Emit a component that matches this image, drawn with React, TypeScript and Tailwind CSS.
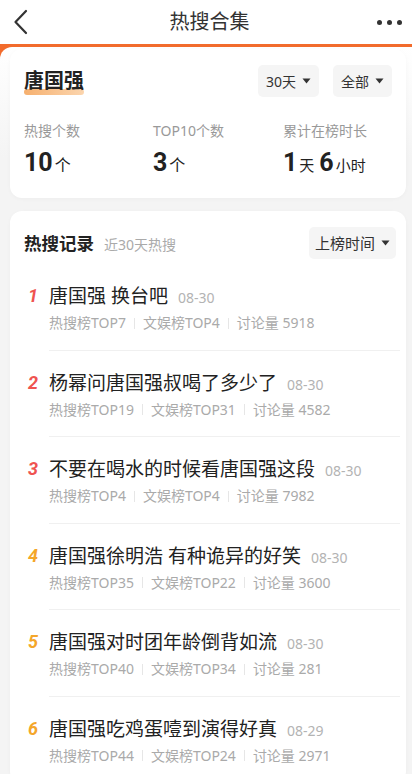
import React from "react";

const font = { fontFamily: '"Noto Sans", "Noto Sans CJK SC", sans-serif' };
const num = { fontFamily: "Roboto, sans-serif" };

const records = [
  { title: "唐国强 换台吧", date: "08-30", hot: "热搜榜TOP7", ent: "文娱榜TOP4", talk: "讨论量 5918" },
  { title: "杨幂问唐国强叔喝了多少了", date: "08-30", hot: "热搜榜TOP19", ent: "文娱榜TOP31", talk: "讨论量 4582" },
  { title: "不要在喝水的时候看唐国强这段", date: "08-30", hot: "热搜榜TOP4", ent: "文娱榜TOP4", talk: "讨论量 7982" },
  { title: "唐国强徐明浩 有种诡异的好笑", date: "08-30", hot: "热搜榜TOP35", ent: "文娱榜TOP22", talk: "讨论量 3600" },
  { title: "唐国强对时团年龄倒背如流", date: "08-30", hot: "热搜榜TOP40", ent: "文娱榜TOP34", talk: "讨论量 281" },
  { title: "唐国强吃鸡蛋噎到演得好真", date: "08-29", hot: "热搜榜TOP44", ent: "文娱榜TOP24", talk: "讨论量 2971" },
];

const Caret = () => (
  <svg width="9" height="6" viewBox="0 0 9 6" className="ml-[6px]">
    <path d="M0.5 0.5h8L4.5 5.5z" fill="#333" />
  </svg>
);

const Pill = ({ label, className = "" }: { label: string; className?: string }) => (
  <button className={`flex items-center justify-center h-[32px] rounded-[5px] bg-[#f5f5f5] text-[14px] text-[#333] ${className}`}>
    {label}
    <Caret />
  </button>
);

const Sep = () => <span className="inline-block w-px h-[11px] bg-[#e6e6e6] mx-[8px]" />;

export default function App() {
  return (
    <div className="w-[412px] h-[774px] overflow-hidden bg-[#f4f4f4]" style={font}>
      {/* top bar */}
      <div className="h-[44px] bg-white grid grid-cols-[1fr_auto_1fr] items-center px-[13px] pr-[10px]">
        <svg width="16" height="26" viewBox="0 0 16 26">
          <path d="M13 2L2.5 13L13 24" fill="none" stroke="#333" strokeWidth="2.2" strokeLinecap="round" strokeLinejoin="round" />
        </svg>
        <div className="text-[20px] text-[#333] ml-[4px]">热搜合集</div>
        <div className="flex items-center justify-end gap-[5px]">
          <span className="w-[5px] h-[5px] rounded-full bg-[#333]" />
          <span className="w-[5px] h-[5px] rounded-full bg-[#333]" />
          <span className="w-[5px] h-[5px] rounded-full bg-[#333]" />
        </div>
      </div>

      <div className="bg-[#f26b2c] pt-[3px]">
        <div className="rounded-tl-[12px] bg-[linear-gradient(to_bottom,#ffffff_0px,#f4f4f4_110px)] pt-[2px] pb-[20px]">
          {/* summary card */}
          <div className="ml-[10px] w-[396px] bg-white rounded-[12px] shadow-[0_1px_4px_rgba(0,0,0,0.03)] px-[14px] pt-[16px] pb-[20px]">
            <div className="flex items-center justify-between">
              <div className="relative">
                <span className="absolute left-0 right-0 bottom-[1px] h-[6px] rounded-full bg-[linear-gradient(to_right,#f6b06f,#fbd5ae)]" />
                <span className="relative text-[20px] font-bold text-[#222]">唐国强</span>
              </div>
              <div className="flex items-center">
                <Pill label="30天" className="w-[61px]" />
                <Pill label="全部" className="w-[59px] ml-[14px]" />
              </div>
            </div>
            <div className="flex mt-[24px]">
              <div className="w-[129px]">
                <div className="text-[14px] text-[#999] leading-[20px]">热搜个数</div>
                <div className="mt-[7px] flex items-baseline text-[#222]">
                  <span className="text-[25px] font-bold leading-[30px]" style={num}>10</span>
                  <span className="text-[16px] ml-[2px]">个</span>
                </div>
              </div>
              <div className="w-[130px]">
                <div className="text-[14px] text-[#999] leading-[20px]">TOP10个数</div>
                <div className="mt-[7px] flex items-baseline text-[#222]">
                  <span className="text-[25px] font-bold leading-[30px]" style={num}>3</span>
                  <span className="text-[16px] ml-[2px]">个</span>
                </div>
              </div>
              <div>
                <div className="text-[14px] text-[#999] leading-[20px]">累计在榜时长</div>
                <div className="mt-[7px] flex items-baseline text-[#222]">
                  <span className="text-[25px] font-bold leading-[30px]" style={num}>1</span>
                  <span className="text-[15px] ml-[2px] mr-[5px]">天</span>
                  <span className="text-[25px] font-bold leading-[30px]" style={num}>6</span>
                  <span className="text-[15px] ml-[2px]">小时</span>
                </div>
              </div>
            </div>
          </div>

          {/* records card */}
          <div className="ml-[10px] mt-[13px] w-[396px] bg-white rounded-[12px] shadow-[0_1px_4px_rgba(0,0,0,0.03)] pl-[14px] pr-[6px] pt-[16px]">
            <div className="flex items-center justify-between pr-[4px]">
              <div className="flex items-baseline">
                <span className="text-[17.5px] font-bold text-[#222]">热搜记录</span>
                <span className="text-[14px] text-[#aaa] ml-[10px]">近30天热搜</span>
              </div>
              <Pill label="上榜时间" className="w-[87px] text-[15px]" />
            </div>
            <div className="mt-[5px]">
              {records.map((r, i) => (
                <div key={i} className="flex">
                  <div
                    className={`w-[25px] pl-[4px] pt-[19px] text-[18px] font-bold italic leading-[26px] ${i < 3 ? "text-[#ef5350]" : "text-[#f4a62a]"}`}
                    style={num}
                  >
                    {i + 1}
                  </div>
                  <div className="flex-1 pt-[19px] pb-[16.5px] border-b border-[#f0f0f0]">
                    <div className="flex items-baseline leading-[26px]">
                      <span className="text-[19px] text-[#222]">{r.title}</span>
                      <span className="text-[14px] text-[#b3b3b3] ml-[10px]">{r.date}</span>
                    </div>
                    <div className="mt-[2px] flex items-center text-[14px] leading-[20px] text-[#aaa]">
                      <span>{r.hot}</span>
                      <Sep />
                      <span>{r.ent}</span>
                      <Sep />
                      <span>{r.talk}</span>
                    </div>
                  </div>
                </div>
              ))}
            </div>
          </div>
        </div>
      </div>
    </div>
  );
}
